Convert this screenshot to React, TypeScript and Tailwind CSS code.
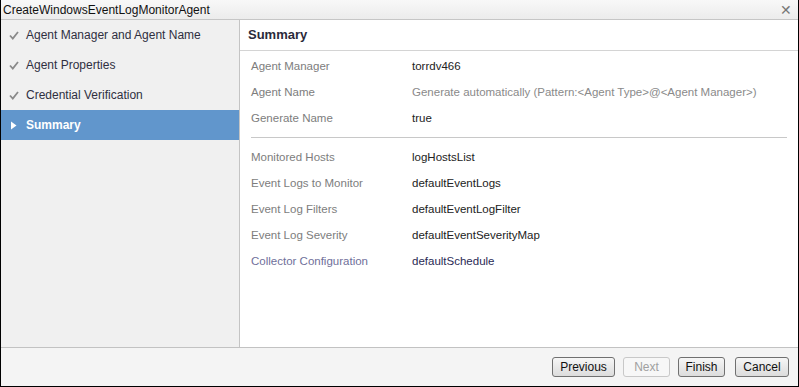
const steps = [
  { title: "Agent Manager and Agent Name", done: true },
  { title: "Agent Properties", done: true },
  { title: "Credential Verification", done: true },
  { title: "Summary", active: true },
];

const topRows = [
  { label: "Agent Manager", value: "torrdv466" },
  { label: "Agent Name", value: "Generate automatically (Pattern:<Agent Type>@<Agent Manager>)", muted: true },
  { label: "Generate Name", value: "true" },
];

const bottomRows = [
  { label: "Monitored Hosts", value: "logHostsList" },
  { label: "Event Logs to Monitor", value: "defaultEventLogs" },
  { label: "Event Log Filters", value: "defaultEventLogFilter" },
  { label: "Event Log Severity", value: "defaultEventSeverityMap" },
  { label: "Collector Configuration", value: "defaultSchedule", link: true },
];

function Row({ label, value, muted, link }: { label: string; value: string; muted?: boolean; link?: boolean }) {
  return (
    <div className="flex h-[26px] items-center">
      <div className={`w-[161px] ${link ? "text-[#6f6f9a]" : "text-[#7d7d7d]"}`}>{label}</div>
      <div className={muted ? "text-[#8a8a8a]" : link ? "text-[#2a2a55]" : "text-[#222]"}>{value}</div>
    </div>
  );
}

function Button({ label, width, disabled }: { label: string; width: string; disabled?: boolean }) {
  return (
    <button
      className={`${width} h-[20px] rounded-[3px] border text-[12px] leading-none ${
        disabled
          ? "border-[#c8c8c8] bg-[#f7f7f7] text-[#a0a0a0]"
          : "border-[#707070] bg-gradient-to-b from-[#f6f6f6] to-[#dcdcdc] text-[#111]"
      }`}
    >
      {label}
    </button>
  );
}

export default function App() {
  return (
    <div
      className="w-[799px] h-[387px] flex flex-col bg-white border-x border-b border-black text-[11.5px] overflow-hidden"
      style={{ fontFamily: '"Liberation Sans", Arial, sans-serif' }}
    >
      {/* Title bar */}
      <div className="h-[20px] flex items-center justify-between pl-[2px] pr-[6px] bg-gradient-to-b from-[#f8f8f8] to-[#ececec] border-b border-[#c6c6c6] text-[12px]">
        <span className="text-[#111]">CreateWindowsEventLogMonitorAgent</span>
        <span className="text-[#777] text-[14px] leading-none">✕</span>
      </div>

      <div className="flex flex-1 border-b border-[#c2c2c2]">
        {/* Steps */}
        <div className="w-[239px] bg-[#f0f0f0] border-r border-[#c4c4c4] text-[12px]">
          {steps.map((s) => (
            <div
              key={s.title}
              className={`h-[30px] flex items-center ${s.active ? "bg-[#6196cc] text-white font-bold" : "text-[#2f2f3f]"}`}
            >
              <span className="w-[25px] flex justify-center">
                {s.active ? (
                  <svg width="8" height="9" viewBox="0 0 8 9">
                    <path d="M1 0.5 L6.5 4.5 L1 8.5 Z" fill="#fff" />
                  </svg>
                ) : (
                  <svg width="10" height="9" viewBox="0 0 10 9">
                    <path d="M1 4.5 L3.8 7.5 L9 1" stroke="#8a8a8a" strokeWidth="1.8" fill="none" />
                  </svg>
                )}
              </span>
              <span>{s.title}</span>
            </div>
          ))}
        </div>

        {/* Summary */}
        <div className="flex-1">
          <div className="h-[31px] flex items-center pl-[8px] border-b border-[#d4d4d4] font-bold text-[#2a2a3a] text-[13px]">
            Summary
          </div>
          <div className="pl-[11px] pr-[11px] pt-[3px]">
            {topRows.map((r) => (
              <Row key={r.label} {...r} />
            ))}
            <div className="h-px bg-[#c8c8c8] mt-[5px] mb-[7px]" />
            {bottomRows.map((r) => (
              <Row key={r.label} {...r} />
            ))}
          </div>
        </div>
      </div>

      {/* Footer */}
      <div className="h-[38px] bg-[#f4f4f4] flex items-center justify-end pr-[9px]">
        <Button label="Previous" width="w-[63px]" />
        <span className="w-[8px]" />
        <Button label="Next" width="w-[47px]" disabled />
        <span className="w-[8px]" />
        <Button label="Finish" width="w-[47px]" />
        <span className="w-[10px]" />
        <Button label="Cancel" width="w-[54px]" />
      </div>
    </div>
  );
}
